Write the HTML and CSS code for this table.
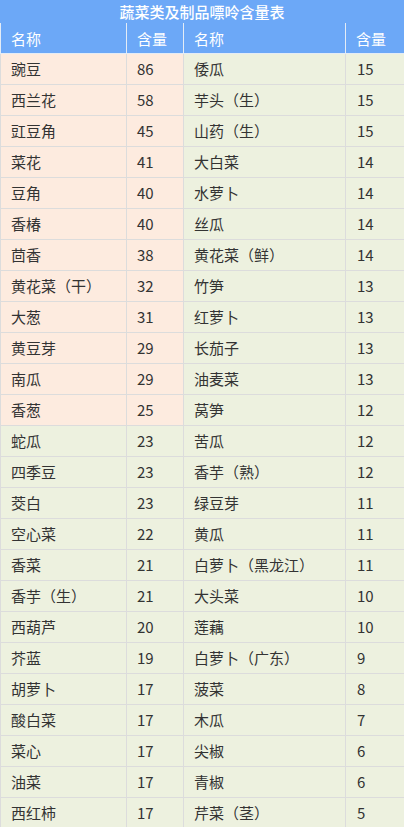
FILE: index.html
```html
<!DOCTYPE html>
<html lang="zh">
<head>
<meta charset="utf-8">
<link rel="stylesheet" href="styles.css">
</head>
<body>
<div class="title">蔬菜类及制品嘌呤含量表</div>
<table class="purine">
<colgroup><col class="c1"><col class="c2"><col class="c3"><col class="c4"></colgroup>
<thead>
<tr><th>名称</th><th>含量</th><th>名称</th><th>含量</th></tr>
</thead>
<tbody>
<tr><td class="hi">豌豆</td><td class="hi">86</td><td>倭瓜</td><td>15</td></tr>
<tr><td class="hi">西兰花</td><td class="hi">58</td><td>芋头（生）</td><td>15</td></tr>
<tr><td class="hi">豇豆角</td><td class="hi">45</td><td>山药（生）</td><td>15</td></tr>
<tr><td class="hi">菜花</td><td class="hi">41</td><td>大白菜</td><td>14</td></tr>
<tr><td class="hi">豆角</td><td class="hi">40</td><td>水萝卜</td><td>14</td></tr>
<tr><td class="hi">香椿</td><td class="hi">40</td><td>丝瓜</td><td>14</td></tr>
<tr><td class="hi">茴香</td><td class="hi">38</td><td>黄花菜（鲜）</td><td>14</td></tr>
<tr><td class="hi">黄花菜（干）</td><td class="hi">32</td><td>竹笋</td><td>13</td></tr>
<tr><td class="hi">大葱</td><td class="hi">31</td><td>红萝卜</td><td>13</td></tr>
<tr><td class="hi">黄豆芽</td><td class="hi">29</td><td>长茄子</td><td>13</td></tr>
<tr><td class="hi">南瓜</td><td class="hi">29</td><td>油麦菜</td><td>13</td></tr>
<tr><td class="hi">香葱</td><td class="hi">25</td><td>莴笋</td><td>12</td></tr>
<tr><td>蛇瓜</td><td>23</td><td>苦瓜</td><td>12</td></tr>
<tr><td>四季豆</td><td>23</td><td>香芋（熟）</td><td>12</td></tr>
<tr><td>茭白</td><td>23</td><td>绿豆芽</td><td>11</td></tr>
<tr><td>空心菜</td><td>22</td><td>黄瓜</td><td>11</td></tr>
<tr><td>香菜</td><td>21</td><td>白萝卜（黑龙江）</td><td>11</td></tr>
<tr><td>香芋（生）</td><td>21</td><td>大头菜</td><td>10</td></tr>
<tr><td>西葫芦</td><td>20</td><td>莲藕</td><td>10</td></tr>
<tr><td>芥蓝</td><td>19</td><td>白萝卜（广东）</td><td>9</td></tr>
<tr><td>胡萝卜</td><td>17</td><td>菠菜</td><td>8</td></tr>
<tr><td>酸白菜</td><td>17</td><td>木瓜</td><td>7</td></tr>
<tr><td>菜心</td><td>17</td><td>尖椒</td><td>6</td></tr>
<tr><td>油菜</td><td>17</td><td>青椒</td><td>6</td></tr>
<tr><td>西红柿</td><td>17</td><td>芹菜（茎）</td><td>5</td></tr>
</tbody>
</table>
</body>
</html>
```
FILE: styles.css
```css
html, body {
  margin: 0;
  padding: 0;
  background: #ffffff;
  font-family: "Noto Sans CJK SC", "Microsoft YaHei", sans-serif;
}
.title {
  height: 23px;
  line-height: 23px;
  background: #6ca8f7;
  color: #ffffff;
  text-align: center;
  font-size: 15px;
  font-weight: 500;
}
.purine {
  width: 404px;
  border-collapse: collapse;
  table-layout: fixed;
  font-size: 15px;
  color: #333333;
}
.c1 { width: 126px; }
.c2 { width: 57px; }
.c3 { width: 162px; }
.c4 { width: 59px; }
.purine th {
  background: #6ca8f7;
  color: #ffffff;
  font-weight: normal;
  text-align: left;
  height: 30px;
  padding: 0 0 0 10px;
  border: 1px solid #e4ecf6;
  border-top: none;
}
.purine td {
  background: #edf1df;
  height: 30px;
  padding: 0 0 0 10px;
  border: 1px solid #dcdcdc;
  white-space: nowrap;
  line-height: 20px;
}
.purine td:nth-child(4) {
  padding-left: 11px;
}
.purine td.hi {
  background: #fdebdf;
}
```
